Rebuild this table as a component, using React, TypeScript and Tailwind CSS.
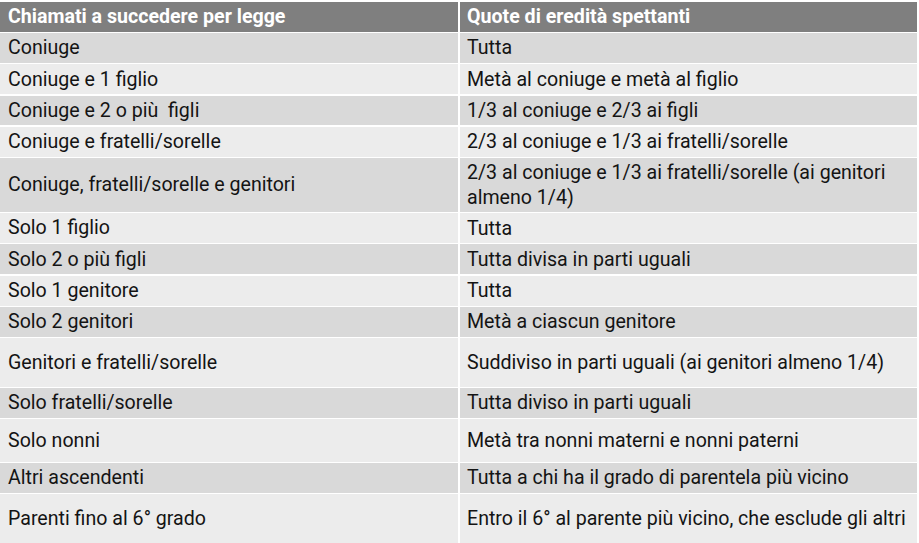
const rows: { who: string; share: string; h: string }[] = [
  { who: "Coniuge", share: "Tutta", h: "h-[29.8px]" },
  { who: "Coniuge e 1 figlio", share: "Metà al coniuge e metà al figlio", h: "h-[29.8px]" },
  { who: "Coniuge e 2 o più  figli", share: "1/3 al coniuge e 2/3 ai figli", h: "h-[29.8px]" },
  { who: "Coniuge e fratelli/sorelle", share: "2/3 al coniuge e 1/3 ai fratelli/sorelle", h: "h-[29.8px]" },
  {
    who: "Coniuge, fratelli/sorelle e genitori",
    share: "2/3 al coniuge e 1/3 ai fratelli/sorelle (ai genitori almeno 1/4)",
    h: "h-[53.5px]",
  },
  { who: "Solo 1 figlio", share: "Tutta", h: "h-[29.8px]" },
  { who: "Solo 2 o più figli", share: "Tutta divisa in parti uguali", h: "h-[29.8px]" },
  { who: "Solo 1 genitore", share: "Tutta", h: "h-[29.8px]" },
  { who: "Solo 2 genitori", share: "Metà a ciascun genitore", h: "h-[29.8px]" },
  { who: "Genitori e fratelli/sorelle", share: "Suddiviso in parti uguali (ai genitori almeno 1/4)", h: "h-[48.2px]" },
  { who: "Solo fratelli/sorelle", share: "Tutta diviso in parti uguali", h: "h-[29.5px]" },
  { who: "Solo nonni", share: "Metà tra nonni materni e nonni paterni", h: "h-[42.5px]" },
  { who: "Altri ascendenti", share: "Tutta a chi ha il grado di parentela più vicino", h: "h-[29.5px]" },
  { who: "Parenti fino al 6° grado", share: "Entro il 6° al parente più vicino, che esclude gli altri", h: "h-[49px]" },
];

export default function App() {
  return (
    <div className="w-[919px] h-[543px] overflow-hidden bg-white pt-[2px] font-['Roboto',sans-serif] text-[19.6px] text-[#141414]">
      <div className="flex flex-col gap-[1.5px] w-[917px]">
        {/* Header */}
        <div className="grid grid-cols-[458px_457px] gap-[2px] h-[29.5px]">
          <div className="bg-[#7f7f7f] text-white font-bold flex items-center pl-[8px]">Chiamati a succedere per legge</div>
          <div className="bg-[#7f7f7f] text-white font-bold flex items-center pl-[7px]">Quote di eredità spettanti</div>
        </div>

        {rows.map((r, i) => {
          const bg = i % 2 === 0 ? "bg-[#d9d9d9]" : "bg-[#ececec]";
          return (
            <div key={i} className={`grid grid-cols-[458px_457px] gap-[2px] ${r.h}`}>
              <div className={`${bg} flex items-center pl-[8px] whitespace-pre`}>{r.who}</div>
              <div className={`${bg} flex items-center pl-[7px] pr-[8px] leading-[25px]`}>{r.share}</div>
            </div>
          );
        })}
      </div>
    </div>
  );
}
